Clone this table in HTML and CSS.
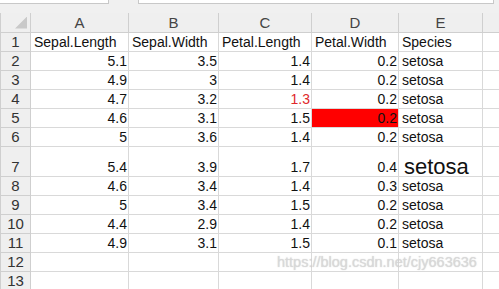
FILE: index.html
```html
<!DOCTYPE html>
<html>
<head>
    <meta charset="utf-8">
    <title>iris</title>
    <link rel="stylesheet" href="styles.css">
</head>
<body>
    <div class="sheet">
        <!-- 编辑栏残留的两个框 -->
        <div class="bar">
            <div class="bar-name"></div>
            <div class="bar-formula"></div>
        </div>
        <table class="grid">
            <colgroup>
                <col class="c-row"><col class="c-a"><col class="c-b"><col class="c-c"><col class="c-d"><col class="c-e"><col class="c-f">
            </colgroup>
            <tr class="head">
                <th class="corner"></th><th>A</th><th>B</th><th>C</th><th>D</th><th>E</th><th></th>
            </tr>
            <tr>
                <th>1</th><td>Sepal.Length</td><td>Sepal.Width</td><td>Petal.Length</td><td>Petal.Width</td><td>Species</td><td></td>
            </tr>
            <tr>
                <th>2</th><td class="num">5.1</td><td class="num">3.5</td><td class="num">1.4</td><td class="num">0.2</td><td>setosa</td><td></td>
            </tr>
            <tr>
                <th>3</th><td class="num">4.9</td><td class="num">3</td><td class="num">1.4</td><td class="num">0.2</td><td>setosa</td><td></td>
            </tr>
            <tr>
                <th>4</th><td class="num">4.7</td><td class="num">3.2</td><td class="num red-text">1.3</td><td class="num">0.2</td><td>setosa</td><td></td>
            </tr>
            <tr>
                <th>5</th><td class="num">4.6</td><td class="num">3.1</td><td class="num">1.5</td><td class="num red-fill">0.2</td><td>setosa</td><td></td>
            </tr>
            <tr>
                <th>6</th><td class="num">5</td><td class="num">3.6</td><td class="num">1.4</td><td class="num">0.2</td><td>setosa</td><td></td>
            </tr>
            <tr class="tall">
                <th>7</th><td class="num">5.4</td><td class="num">3.9</td><td class="num">1.7</td><td class="num">0.4</td><td class="big">setosa</td><td></td>
            </tr>
            <tr>
                <th>8</th><td class="num">4.6</td><td class="num">3.4</td><td class="num">1.4</td><td class="num">0.3</td><td>setosa</td><td></td>
            </tr>
            <tr>
                <th>9</th><td class="num">5</td><td class="num">3.4</td><td class="num">1.5</td><td class="num">0.2</td><td>setosa</td><td></td>
            </tr>
            <tr>
                <th>10</th><td class="num">4.4</td><td class="num">2.9</td><td class="num">1.4</td><td class="num">0.2</td><td>setosa</td><td></td>
            </tr>
            <tr>
                <th>11</th><td class="num">4.9</td><td class="num">3.1</td><td class="num">1.5</td><td class="num">0.1</td><td>setosa</td><td></td>
            </tr>
            <tr>
                <th>12</th><td></td><td></td><td></td><td></td><td></td><td></td>
            </tr>
            <tr>
                <th>13</th><td></td><td></td><td></td><td></td><td></td><td></td>
            </tr>
        </table>
        <div class="mark">https://blog.csdn.net/cjy663636</div>
    </div>
</body>
</html>
```

FILE: styles.css
```css
*{margin:0;padding:0;box-sizing:border-box;}
body{background:#fff;font-family:"Liberation Sans","Noto Sans CJK SC",sans-serif;overflow:hidden;}

.sheet{position:relative;width:499px;height:289px;overflow:hidden;background:#f0f0f0;}

.bar{display:flex;height:13px;gap:29px;}
.bar-name{width:109px;height:4px;background:#fff;border:1px solid #c8c8c8;border-top:none;border-left:none;}
.bar-formula{width:356px;height:4px;background:#fff;border:1px solid #c8c8c8;border-top:none;}

.grid{border-collapse:collapse;table-layout:fixed;width:520px;font-size:14px;color:#111;}
.c-row{width:30px;}
.c-a{width:98px;}
.c-b{width:90px;}
.c-c{width:93px;}
.c-d{width:87px;}
.c-e{width:84px;}
.c-f{width:38px;}

.grid tr{height:19px;}
.grid tr.tall{height:30px;}
.grid td{background:#fff;border:1px solid #d9d9d9;padding:0 3px 1px;line-height:16px;vertical-align:bottom;white-space:nowrap;overflow:visible;}
.grid th{background:#efefef;border:1px solid #cfcfcf;font-weight:normal;color:#333;text-align:center;vertical-align:bottom;line-height:16px;font-size:15px;padding-bottom:1px;}
.grid tr.head th{color:#444;border-top:none;}

.corner{position:relative;}
.corner::after{content:"";position:absolute;right:3px;bottom:3px;width:12px;height:12px;background:#c9c9c9;clip-path:polygon(100% 0,100% 100%,0 100%);}

.num{text-align:right;padding-right:1px !important;}
.red-text{color:#e0282a;}
.red-fill{background:#ff0000 !important;}
.big{font-size:22px;line-height:26px;padding-left:5px !important;}

/* csdn 水印 */
.mark{position:absolute;left:277px;top:254px;font-size:14.5px;color:rgba(218,218,218,0.8);text-shadow:0 0 1px rgba(150,150,150,0.5);white-space:nowrap;}
```
